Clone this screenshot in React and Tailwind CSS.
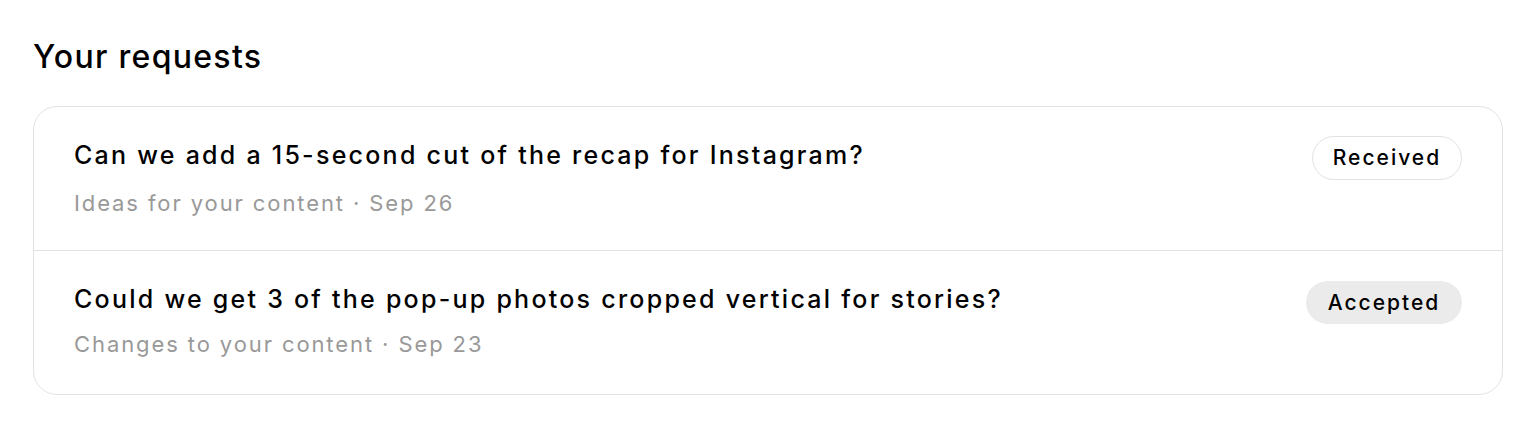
import React from "react";

const requests = [
  {
    title: "Can we add a 15-second cut of the recap for Instagram?",
    meta: "Ideas for your content · Sep 26",
    status: "Received",
  },
  {
    title: "Could we get 3 of the pop-up photos cropped vertical for stories?",
    meta: "Changes to your content · Sep 23",
    status: "Accepted",
  },
];

function StatusBadge({ status }) {
  if (status === "Accepted") {
    return (
      <span className="inline-flex items-center justify-center shrink-0 w-[156px] h-[43px] mt-[1px] rounded-full bg-[#ebebeb] text-[21px] font-medium tracking-[2px] text-black">
        {status}
      </span>
    );
  }

  return (
    <span className="inline-flex items-center justify-center shrink-0 w-[150px] h-[44px] rounded-full bg-white border border-[#e2e2e2] text-[21px] font-medium tracking-[2px] text-black">
      {status}
    </span>
  );
}

export default function App() {
  return (
    <div
      className="bg-white min-h-screen px-[33px] pt-[36px] text-black"
      style={{ fontFamily: "Inter, 'Noto Sans', sans-serif" }}
    >
      {/* ================= HEADER ================= */}
      <h1 className="text-[32px] leading-[42px] font-medium tracking-[1.3px]">
        Your requests
      </h1>

      {/* ================= LIST ================= */}
      <div className="mt-[28px] border border-[#e3e3e3] rounded-[24px] overflow-hidden">
        {requests.map((r, index) => (
          <div
            key={index}
            className={
              "flex items-start justify-between px-[40px] pt-[29px] " +
              (index > 0 ? "border-t border-[#e3e3e3] pb-[35px]" : "pb-[32px]")
            }
          >
            <div className="pt-[3px]">
              <p className="text-[25px] leading-[32px] font-medium tracking-[2.25px]">
                {r.title}
              </p>
              <p
                className={
                  "text-[22px] leading-[30px] tracking-[1.9px] text-[#999999] " +
                  (index > 0 ? "mt-[14px]" : "mt-[17px]")
                }
              >
                {r.meta}
              </p>
            </div>

            <StatusBadge status={r.status} />
          </div>
        ))}
      </div>
    </div>
  );
}
